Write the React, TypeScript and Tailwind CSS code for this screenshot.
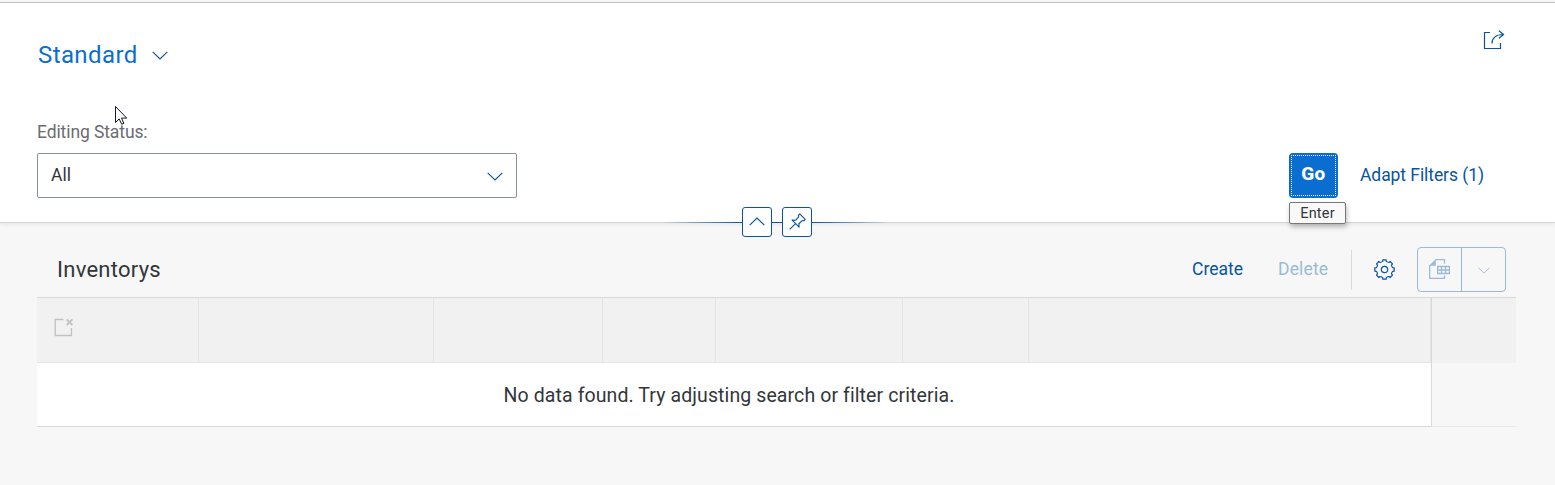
import React from "react";

const columns = [
  "w-[162px]",
  "w-[235px]",
  "w-[169px]",
  "w-[113px]",
  "w-[187px]",
  "w-[126px]",
  "w-[402px]",
];

function Chevron({ className, up = false }: { className: string; up?: boolean }) {
  return (
    <svg className={className} viewBox="0 0 16 9" fill="none" stroke="currentColor" strokeWidth="1.15">
      <path d={up ? "M.7 8.2 8 1l7.3 7.2" : "M.7.8 8 8 15.3.8"} />
    </svg>
  );
}

function ShareIcon() {
  return (
    <svg className="block h-5 w-[22px]" viewBox="0 0 22 20" fill="none" stroke="#0854a0" strokeWidth="1.2">
      <path d="M7 2.5H1.5v16h16V13" />
      <path d="M9 13.5c-.2-5 3.5-9 11.5-9M16 .8l4.5 3.7L16 8.2" />
    </svg>
  );
}

function GearIcon() {
  const teeth = Array.from({ length: 8 }, (_, i) => {
    const c = (i * Math.PI) / 4;
    const point = (r: number, a: number) =>
      `${(10.5 + r * Math.sin(c + a)).toFixed(2)} ${(10.5 - r * Math.cos(c + a)).toFixed(2)}`;
    return `${point(8.3, -0.22)} L${point(9.8, -0.17)} L${point(9.8, 0.17)} L${point(8.3, 0.22)} Q${point(7.7, Math.PI / 8)} `;
  });
  return (
    <svg className="block h-[21px] w-[21px]" viewBox="0 0 21 21" fill="none" stroke="#0854a0" strokeWidth="1.2" strokeLinejoin="round">
      <path d={`M${teeth.join("")}${(10.5 + 8.3 * Math.sin(-0.22)).toFixed(2)} ${(10.5 - 8.3 * Math.cos(-0.22)).toFixed(2)}Z`} />
      <circle cx="10.5" cy="10.5" r="3.2" />
    </svg>
  );
}

function PinIcon() {
  return (
    <svg className="mb-0.5 block h-[17px] w-[17px]" viewBox="0 0 18 18" fill="none" stroke="#0854a0" strokeWidth="1.2" strokeLinejoin="round">
      <path d="M11.4 1 17.2 6.8l-1.4 1.4-1.8-.2-3.5 3.4.2 3.5-7.4-7.4 3.6.2L10.2 4 10 2.4zM6.9 11.3.7 17.4" />
    </svg>
  );
}

function ExportIcon() {
  return (
    <svg className="block h-5 w-[21px]" viewBox="0 0 21 20" fill="none" stroke="#9bbad7" strokeWidth="1.3">
      <path d="M.7 6v13.3h14.8V16.5M15.5 4.5V.7H6.5" />
      <path d="M0 6.8 6.8 0v6.8z" fill="#9bbad7" stroke="none" />
      <path d="M8.6 7.5h11.8v7H8.6zM8.6 11h11.8M12.5 7.5v7M16.5 7.5v7" />
    </svg>
  );
}

function EmptyIcon() {
  return (
    <svg className="block h-[19px] w-[20px]" viewBox="0 0 20 19" fill="none" stroke="#bfc1c3" strokeWidth="1.3">
      <path d="M9.5 1.5H1.2v16h16.3V10" />
      <path d="m12.6 1.3 5.8 5.8m0-5.8-5.8 5.8" strokeWidth="1.8" />
    </svg>
  );
}

export default function App() {
  return (
    <main className="relative flex h-[485px] w-[1555px] flex-col overflow-hidden bg-[#f7f7f7] font-['Roboto','Liberation_Sans',sans-serif] text-[#32363a]">
      <div className="h-[3px] shrink-0 border-b border-[#bfbfbf] bg-[#f7f7f7]" />

      <header className="relative flex h-[220px] shrink-0 flex-col border-b border-[#d5d5d5] bg-white pl-[37px] shadow-[0_2px_3px_rgba(0,0,0,0.06)]">
        <div className="flex h-[104px] items-start justify-between pr-[50px]">
          <button className="mt-[34px] flex h-9 items-center text-[#0a6ed1]">
            <span className="w-[115px] pl-px text-left text-2xl tracking-[0.4px]">Standard</span>
            <Chevron className="h-[9px] w-4 text-[#0854a0]" />
          </button>
          <button className="mt-[27px]" aria-label="Share">
            <ShareIcon />
          </button>
        </div>
        <div className="flex items-end justify-between pr-[71px]">
          <div className="flex w-[480px] flex-col">
            <label className="flex h-[46px] items-center pt-[5px] text-[17.5px] tracking-[-0.1px] text-[#6a6d70]">Editing Status:</label>
            <button className="flex h-[45px] items-center justify-between rounded-[2px] border border-[#89919a] bg-white pr-[13px] pl-[13px] text-[17.5px]">
              <span>All</span>
              <Chevron className="mt-px h-[9px] w-4 text-[#0854a0]" />
            </button>
          </div>
          <div className="flex items-center gap-[22px]">
            <button className="h-[45px] w-[49px] rounded bg-[#0a6ed1] p-0.5 text-[19px] font-extrabold tracking-[0.3px] text-white">
              <span className="flex h-full items-center justify-center border border-dotted border-white pb-0.5">Go</span>
            </button>
            <button className="w-[124px] text-left text-[17.5px] tracking-[-0.07px] whitespace-nowrap text-[#0854a0]">Adapt Filters (1)</button>
          </div>
        </div>

        <div className="absolute top-[199px] left-[1289px] z-10 flex h-[22px] w-[57px] items-center justify-center rounded-[2px] border border-[#777] bg-[#f9f9f9] pt-px text-[14.5px] tracking-[0.2px] shadow-[1px_3px_5px_rgba(0,0,0,0.25)]">Enter</div>
        <div className="absolute top-[204px] left-[662px] flex h-[30px] w-[228px] items-center">
          <span className="h-px w-20 bg-linear-to-r from-transparent to-[#0854a0]" />
          <button aria-label="Collapse header" className="flex h-[30px] w-[30px] items-center justify-center rounded-[3px] border border-[#0854a0] bg-white pb-px">
            <Chevron className="h-[9px] w-4 text-[#0854a0]" up />
          </button>
          <span className="h-px w-2.5 bg-[#0854a0]" />
          <button aria-label="Pin header" className="flex h-[30px] w-[30px] items-center justify-center rounded-[3px] border border-[#0854a0] bg-white">
            <PinIcon />
          </button>
          <span className="h-px w-[78px] bg-linear-to-l from-transparent to-[#0854a0]" />
        </div>
      </header>

      <section className="ml-[37px] w-[1479px] pt-6">
        <div className="flex h-[50px] items-start justify-between pr-2.5 pl-5">
          <h2 className="flex h-[45px] items-center text-[22px] tracking-[0.25px]">Inventorys</h2>
          <div className="flex h-[45px] items-center text-[17.5px] text-[#0854a0]">
            <button className="w-[86px] text-left">Create</button>
            <button className="w-[73px] text-left tracking-[0.15px] text-[#9bbad7]" disabled>Delete</button>
            <span className="h-10 w-px bg-[#d9d9d9]" />
            <button className="ml-[22px]" aria-label="Settings">
              <GearIcon />
            </button>
            <div className="ml-[22px] flex h-[45px] w-[89px] rounded-[4px] border border-[#9bbad7]">
              <button className="flex w-11 items-center justify-center border-r border-[#9bbad7] pb-0.5" aria-label="Export" disabled>
                <ExportIcon />
              </button>
              <button className="flex flex-1 items-center justify-center pt-0.5 text-[#9bbad7]" aria-label="Export options" disabled>
                <Chevron className="h-[7px] w-3" />
              </button>
            </div>
          </div>
        </div>

        <div className="border-t border-[#d9d9d9]">
          <div className="flex h-[65px] bg-[#f1f1f1]">
            <div className="flex w-[1395px] border-r border-[#d9d9d9]">
              {columns.map((width, i) => (
                <div key={width} className={`${width} shrink-0 border-r border-b border-[#e4e4e4]`}>
                  {i === 0 && (
                    <div className="pt-5 pl-[17px]">
                      <EmptyIcon />
                    </div>
                  )}
                </div>
              ))}
            </div>
          </div>
          <div className="flex h-16">
            <div className="flex w-[1395px] items-center justify-center border-r border-b border-[#d9d9d9] bg-white pt-0.5 pr-2.5">
              <p className="text-[19.5px] tracking-[0.1px] whitespace-nowrap">No data found. Try adjusting search or filter criteria.</p>
            </div>
            <div className="flex-1 border-b border-[#e8e8e8]" />
          </div>
        </div>
      </section>

      <svg className="absolute top-[105px] left-[114px] h-[21px] w-[14px]" viewBox="0 0 14 21">
        <path d="M1.5 1.5v16l3.7-3.6 2.5 5.4 2.2-1-2.4-5.2h5.2z" fill="white" stroke="#111827" strokeWidth="1" />
      </svg>
    </main>
  );
}
